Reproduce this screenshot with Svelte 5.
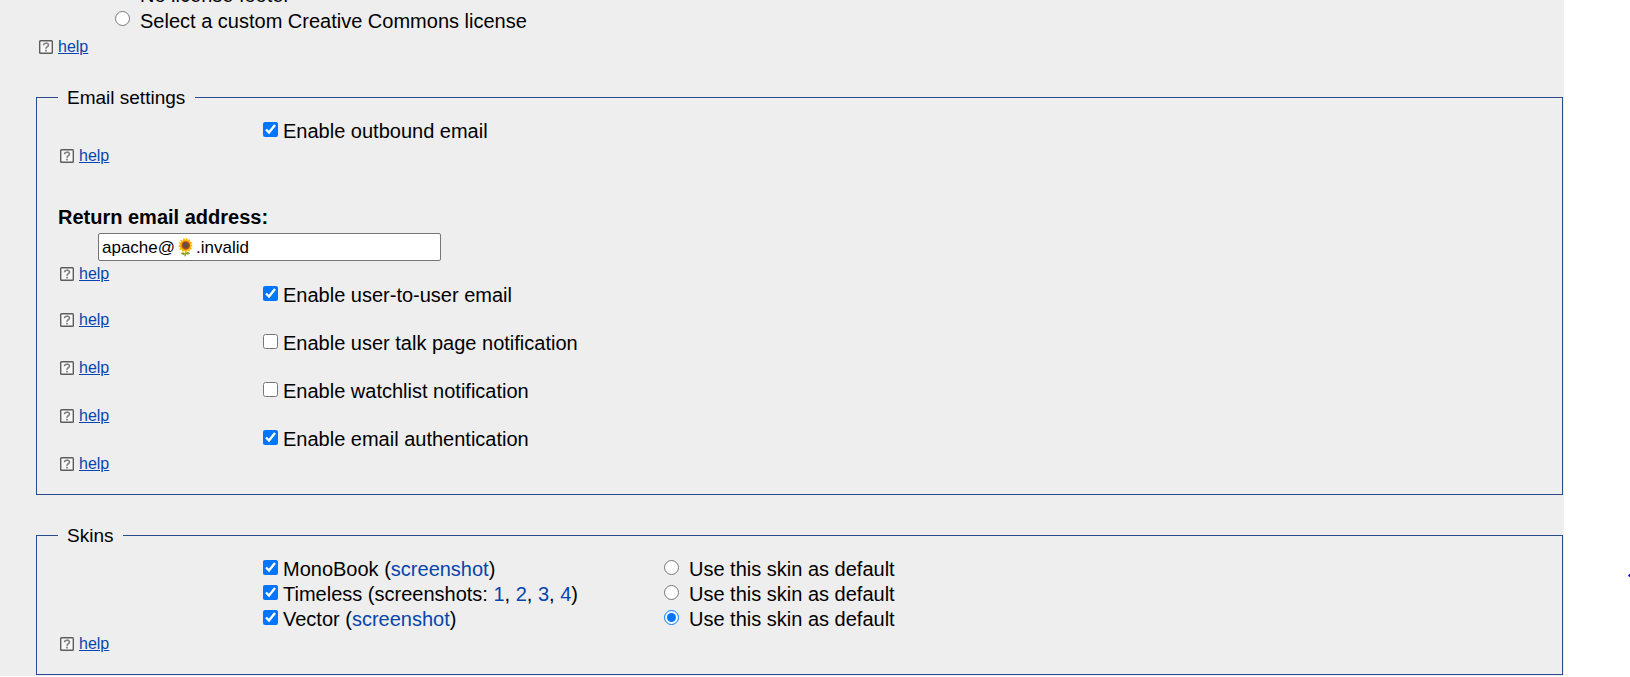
<script>
  let email = 'apache@🌻.invalid';
  let license = '';
  let defaultSkin = 'vector';

  let outbound = { id: 'enable-email', label: 'Enable outbound email', checked: true };

  let options = [
    { id: 'email-user', label: 'Enable user-to-user email', checked: true },
    { id: 'email-talk', label: 'Enable user talk page notification', checked: false },
    { id: 'email-watchlist', label: 'Enable watchlist notification', checked: false },
    { id: 'email-auth', label: 'Enable email authentication', checked: true }
  ];

  let skins = [
    { id: 'monobook', name: 'MonoBook', prefix: '', shots: ['screenshot'], enabled: true },
    { id: 'timeless', name: 'Timeless', prefix: 'screenshots: ', shots: ['1', '2', '3', '4'], enabled: true },
    { id: 'vector', name: 'Vector', prefix: '', shots: ['screenshot'], enabled: true }
  ];
</script>

{#snippet help()}
  <div class="help">
    <svg viewBox="0 0 14 14" width="14" height="14" aria-hidden="true">
      <rect x="0.7" y="0.7" width="12.6" height="12.6" rx="0.8" fill="#f8f8f8" stroke="#5c5c5c" stroke-width="1.4" />
      <path d="M4.6 5.2C4.6 2.6 9.6 2.6 9.5 5C9.4 6.7 7 6.6 7 8.8M7 9.8V11.4" fill="none" stroke="#808080" stroke-width="1.7" />
    </svg>
    <a href="#help">help</a>
  </div>
{/snippet}

{#snippet checkbox(option)}
  <div class="option">
    <input type="checkbox" id={option.id} bind:checked={option.checked} />
    <label for={option.id}>{option.label}</label>
  </div>
{/snippet}

<div class="page">
  <main>
    <div class="licenses">
      <div class="license">
        <input type="radio" id="license-none" value="none" bind:group={license} />
        <label for="license-none">No license footer</label>
      </div>
      <div class="license">
        <input type="radio" id="license-cc" value="cc" bind:group={license} />
        <label for="license-cc">Select a custom Creative Commons license</label>
      </div>
      {@render help()}
    </div>

    <fieldset>
      <legend>Email settings</legend>
      {@render checkbox(outbound)}
      {@render help()}

      <div class="field">
        <label for="return-email">Return email address:</label>
        <input type="text" id="return-email" bind:value={email} />
        {@render help()}
      </div>

      {#each options as option}
        {@render checkbox(option)}
        {@render help()}
      {/each}
    </fieldset>

    <fieldset>
      <legend>Skins</legend>
      <div class="skins">
        {#each skins as skin}
          <div class="choice">
            <input type="checkbox" id={skin.id} bind:checked={skin.enabled} />
            <label for={skin.id}>{skin.name} ({skin.prefix}{#each skin.shots as shot, i}{i ? ', ' : ''}<a href="#{skin.id}-{i}">{shot}</a>{/each})</label>
          </div>
          <div class="choice default">
            <input type="radio" id="{skin.id}-default" value={skin.id} bind:group={defaultSkin} />
            <label for="{skin.id}-default">Use this skin as default</label>
          </div>
        {/each}
      </div>
      {@render help()}
    </fieldset>
  </main>

  <aside>
    <svg viewBox="0 0 2 3" width="2" height="3" aria-hidden="true">
      <path d="M0 1.5L1.5 0H2V3H1.5Z" fill="#1a00d8" />
    </svg>
  </aside>
</div>

<style>
  :global(body) {
    margin: 0;
    background: #fff;
  }

  .page {
    display: flex;
    overflow: hidden;
    font-family: Arial, "Liberation Sans", sans-serif;
    font-size: 20px;
    line-height: 24px;
    color: #000;
  }

  main {
    flex: 1;
    min-width: 0;
    margin-top: -18px;
    padding: 0 1px 1px 36px;
    background: #eee;
  }

  aside {
    display: flex;
    justify-content: flex-end;
    align-items: flex-start;
    box-sizing: border-box;
    width: 66px;
    padding-top: 574px;
  }

  a {
    color: #0645ad;
    text-decoration: none;
  }

  .licenses {
    padding: 0 0 27px 1px;
  }

  .license {
    display: flex;
    align-items: flex-start;
    gap: 10px;
    padding-left: 78px;
    line-height: 26px;
  }

  input[type="checkbox"],
  input[type="radio"] {
    flex: none;
    width: 15px;
    height: 15px;
    margin: 3px 0 0;
  }

  .help {
    display: flex;
    align-items: flex-start;
    gap: 5px;
    height: 24px;
    padding-left: 2px;
    font-size: 16px;
    line-height: 26px;
  }

  .help svg {
    margin-top: 6px;
  }

  .help a {
    text-decoration: underline;
  }

  fieldset {
    min-width: 0;
    margin: 0;
    padding: 10px 21px 19px;
    border: 1px solid #2a4b8d;
  }

  fieldset + fieldset {
    margin-top: 28px;
  }

  legend {
    padding: 2px 10px 0 9px;
    font-size: 19px;
    line-height: 22px;
  }

  .option,
  .choice {
    display: flex;
    align-items: flex-start;
    gap: 5px;
  }

  .option,
  .skins {
    margin-left: 205px;
  }

  .field {
    margin-top: 38px;
  }

  .field label {
    display: block;
    font-weight: bold;
  }

  .field input {
    display: block;
    box-sizing: border-box;
    width: 343px;
    max-width: 100%;
    height: 28px;
    margin: 4px 0 0 40px;
    padding: 1px 3px;
    border: 1px solid #767676;
    border-radius: 2px;
    background: #fff;
    color: #000;
    font-family: inherit;
    font-size: 17px;
  }

  .field .help {
    height: 22px;
  }

  .skins {
    display: grid;
    grid-template-columns: 401px 1fr;
    row-gap: 1px;
  }

  .default {
    gap: 10px;
  }
</style>
